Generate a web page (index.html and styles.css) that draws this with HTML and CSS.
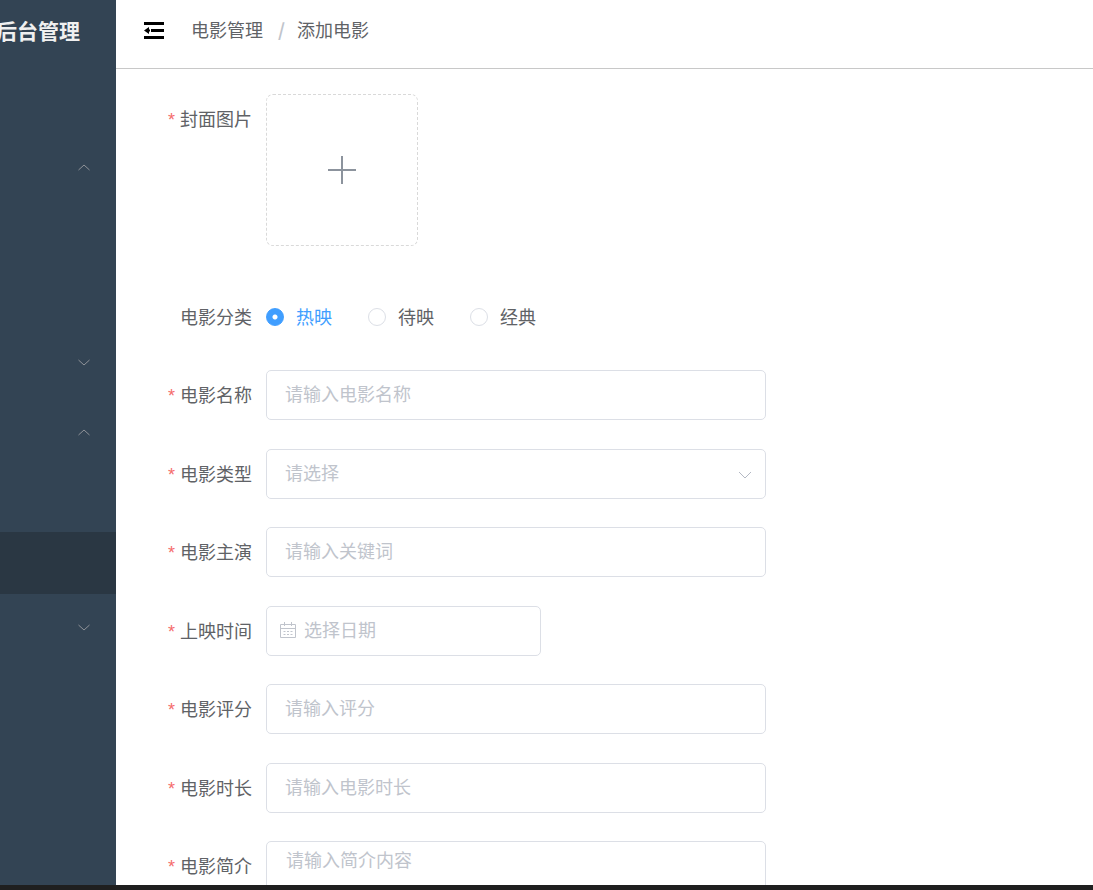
FILE: index.html
```
<!DOCTYPE html>
<html lang="zh-CN">
<head>
<meta charset="utf-8">
<meta name="viewport" content="width=device-width, initial-scale=1">
<title>添加电影</title>
<link rel="stylesheet" href="styles.css">
</head>
<body>
<div class="layout">
  <aside class="sidebar">
    <div class="brand">后台管理</div>
    <nav class="menu">
      <a class="menu-home" href="#" aria-label="首页"></a>
      <div class="group open">
        <button class="group-title" type="button" aria-expanded="true" aria-label="菜单"><svg class="caret" viewBox="0 0 12 7"><path d="M.5 6 6 1l5.500 5"/></svg></button>
        <div class="group-items"><a class="menu-item" href="#" aria-label="菜单项"></a><a class="menu-item" href="#" aria-label="菜单项"></a></div>
      </div>
      <div class="group">
        <button class="group-title" type="button" aria-expanded="false" aria-label="菜单"><svg class="caret" viewBox="0 0 12 7"><path d="M.5 1 6 6l5.500-5"/></svg></button>
      </div>
      <div class="group open">
        <button class="group-title" type="button" aria-expanded="true" aria-label="电影管理"><svg class="caret" viewBox="0 0 12 7"><path d="M.5 6 6 1l5.500 5"/></svg></button>
        <div class="group-items"><a class="menu-item" href="#" aria-label="菜单项"></a><a class="menu-item active" href="#" aria-label="添加电影"></a></div>
      </div>
      <div class="group">
        <button class="group-title" type="button" aria-expanded="false" aria-label="菜单"><svg class="caret" viewBox="0 0 12 7"><path d="M.5 1 6 6l5.500-5"/></svg></button>
      </div>
    </nav>
  </aside>
  <div class="page">
    <header class="topbar">
      <button class="fold" type="button" aria-label="收起菜单"><svg viewBox="0 0 20 17"><path d="M0 0h20v3H0zM7 7h13v3H7zM0 14h20v3H0zM0 8.500 5 5v2.500H6v2H5V12z"/></svg></button>
      <nav class="crumbs"><a href="#">电影管理</a><span class="slash">/</span><span>添加电影</span></nav>
    </header>
    <main class="content">
      <form class="form">
        <div class="field">
          <label class="label required" for="cover">封面图片</label>
          <div class="upload-wrap">
            <button class="upload" id="cover" type="button"><svg viewBox="0 0 28 28"><path d="M14 0v28M0 14h28"/></svg></button>
          </div>
        </div>
        <div class="field" role="radiogroup" aria-labelledby="kind">
          <span class="label" id="kind">电影分类</span>
          <div class="radios">
            <label class="radio"><input type="radio" name="kind" checked><span>热映</span></label>
            <label class="radio"><input type="radio" name="kind"><span>待映</span></label>
            <label class="radio"><input type="radio" name="kind"><span>经典</span></label>
          </div>
        </div>
        <div class="field">
          <label class="label required" for="name">电影名称</label>
          <input class="control" id="name" type="text" placeholder="请输入电影名称">
        </div>
        <div class="field">
          <label class="label required" for="type">电影类型</label>
          <div class="control-wrap">
            <select class="control select" id="type"><option>请选择</option></select>
            <svg class="select-caret" viewBox="0 0 14 8"><path d="M1 1l6 6 6-6"/></svg>
          </div>
        </div>
        <div class="field">
          <label class="label required" for="cast">电影主演</label>
          <input class="control" id="cast" type="text" placeholder="请输入关键词">
        </div>
        <div class="field">
          <label class="label required" for="date">上映时间</label>
          <div class="control-wrap date-wrap">
            <input class="control date" id="date" type="text" placeholder="选择日期">
            <svg class="date-icon" viewBox="0 0 18 18"><path d="M1.500 2.500h15v13h-15zM1.500 6.500h15M5.500 0v4M12.500 0v4M4.500 9.500h2M8 9.500h2M11.500 9.500h2M4.500 12.500h2M8 12.500h2M11.500 12.500h2"/></svg>
          </div>
        </div>
        <div class="field">
          <label class="label required" for="score">电影评分</label>
          <input class="control" id="score" type="text" placeholder="请输入评分">
        </div>
        <div class="field">
          <label class="label required" for="length">电影时长</label>
          <input class="control" id="length" type="text" placeholder="请输入电影时长">
        </div>
        <div class="field">
          <label class="label required" for="intro">电影简介</label>
          <textarea class="control intro" id="intro" rows="4" placeholder="请输入简介内容"></textarea>
        </div>
      </form>
    </main>
  </div>
</div>
<div class="edge"></div>
</body>
</html>
```
FILE: styles.css
```
* { box-sizing: border-box; }

body {
  margin: 0;
  height: 100vh;
  display: flex;
  flex-direction: column;
  overflow: hidden;
  background: #fff;
  color: #606266;
  font-family: "Noto Sans CJK SC", sans-serif;
  font-size: 18px;
  font-weight: 400;
}

button, input, select, textarea { font: inherit; }
button { border: 0; padding: 0; background: none; cursor: pointer; }
a { color: inherit; text-decoration: none; }
svg { display: block; fill: none; stroke: currentColor; }

.layout { flex: 1; min-height: 0; display: flex; overflow: hidden; }
.edge { flex: none; height: 5px; background: #1f1f1f; }

/* Sidebar */
.sidebar { flex: none; width: 116px; overflow: hidden; background: #334454; }
.brand {
  display: flex;
  justify-content: flex-end;
  height: 68px;
  padding-right: 36px;
  color: #f0f0f0;
  font-size: 21px;
  font-weight: 700;
  line-height: 60px;
  white-space: nowrap;
}
.menu-home { display: block; height: 66px; }
.group { margin-bottom: 4px; }
.group.open { margin-bottom: 0; }
.group-title {
  display: flex;
  align-items: center;
  justify-content: flex-end;
  width: 100%;
  height: 66px;
  padding-right: 26px;
  color: #909399;
}
.caret { width: 12px; height: 7px; }
.group-items { padding-top: 5px; }
.menu-item { display: block; height: 62px; }
.menu-item.active { background: #2a3743; }

/* Top bar */
.page { flex: 1; min-width: 0; }
.topbar {
  display: flex;
  align-items: center;
  gap: 27px;
  height: 69px;
  padding: 0 28px 7px;
  border-bottom: 1px solid #c8c8c8;
}
.fold svg { width: 20px; height: 17px; fill: #000; stroke: none; }
.crumbs { display: flex; align-items: center; line-height: 27px; padding-bottom: 2px; }
.slash { margin: 0 12px 0 15px; color: #c0c4cc; font-weight: 700; }

/* Form */
.content { padding: 25px 28px; }
.field {
  display: grid;
  grid-template-columns: 122px minmax(0, 500px);
  margin-bottom: 28px;
}
.field:nth-child(odd) { margin-bottom: 29px; }
.label { padding-right: 14px; line-height: 48px; text-align: right; }
.required::before {
  content: "*";
  margin-right: 5px;
  color: #f56c6c;
  font-family: "Liberation Sans", sans-serif;
}

.upload-wrap { padding-bottom: 17px; }
.upload {
  display: flex;
  align-items: center;
  justify-content: center;
  width: 152px;
  height: 152px;
  border: 1px dashed #d9d9d9;
  border-radius: 7px;
  color: #8c939d;
}
.upload svg { width: 28px; height: 28px; stroke-width: 2; }

.radios { display: flex; align-items: center; gap: 36px; height: 50px; }
.radio { display: flex; align-items: center; gap: 12px; }
.radio span { padding-bottom: 2px; }
.radio input {
  appearance: none;
  width: 18px;
  height: 18px;
  margin: 0;
  border: 1px solid #dcdfe6;
  border-radius: 50%;
  background: #fff;
}
.radio input:checked {
  border-color: #409eff;
  background: radial-gradient(circle, #fff 2px, #409eff 3px);
}
.radio input:checked + span { color: #409eff; }

.control {
  width: 100%;
  height: 50px;
  padding: 0 18px 4px;
  border: 1px solid #dcdfe6;
  border-radius: 5px;
  outline: 0;
  background: #fff;
  color: #606266;
}
.control::placeholder { color: #c0c4cc; opacity: 1; }
.control-wrap { position: relative; }
.date-wrap { max-width: 275px; }
.select { appearance: none; color: #c0c4cc; }
.select-caret {
  position: absolute;
  top: 22px;
  right: 14px;
  width: 14px;
  height: 8px;
  color: #b4b9c4;
  pointer-events: none;
}
.date { padding-left: 37px; }
.date-icon {
  position: absolute;
  top: 16px;
  left: 13px;
  width: 18px;
  height: 18px;
  color: #c0c4cc;
}
.intro { height: 120px; padding: 4px 19px; line-height: 27px; resize: none; }
```
